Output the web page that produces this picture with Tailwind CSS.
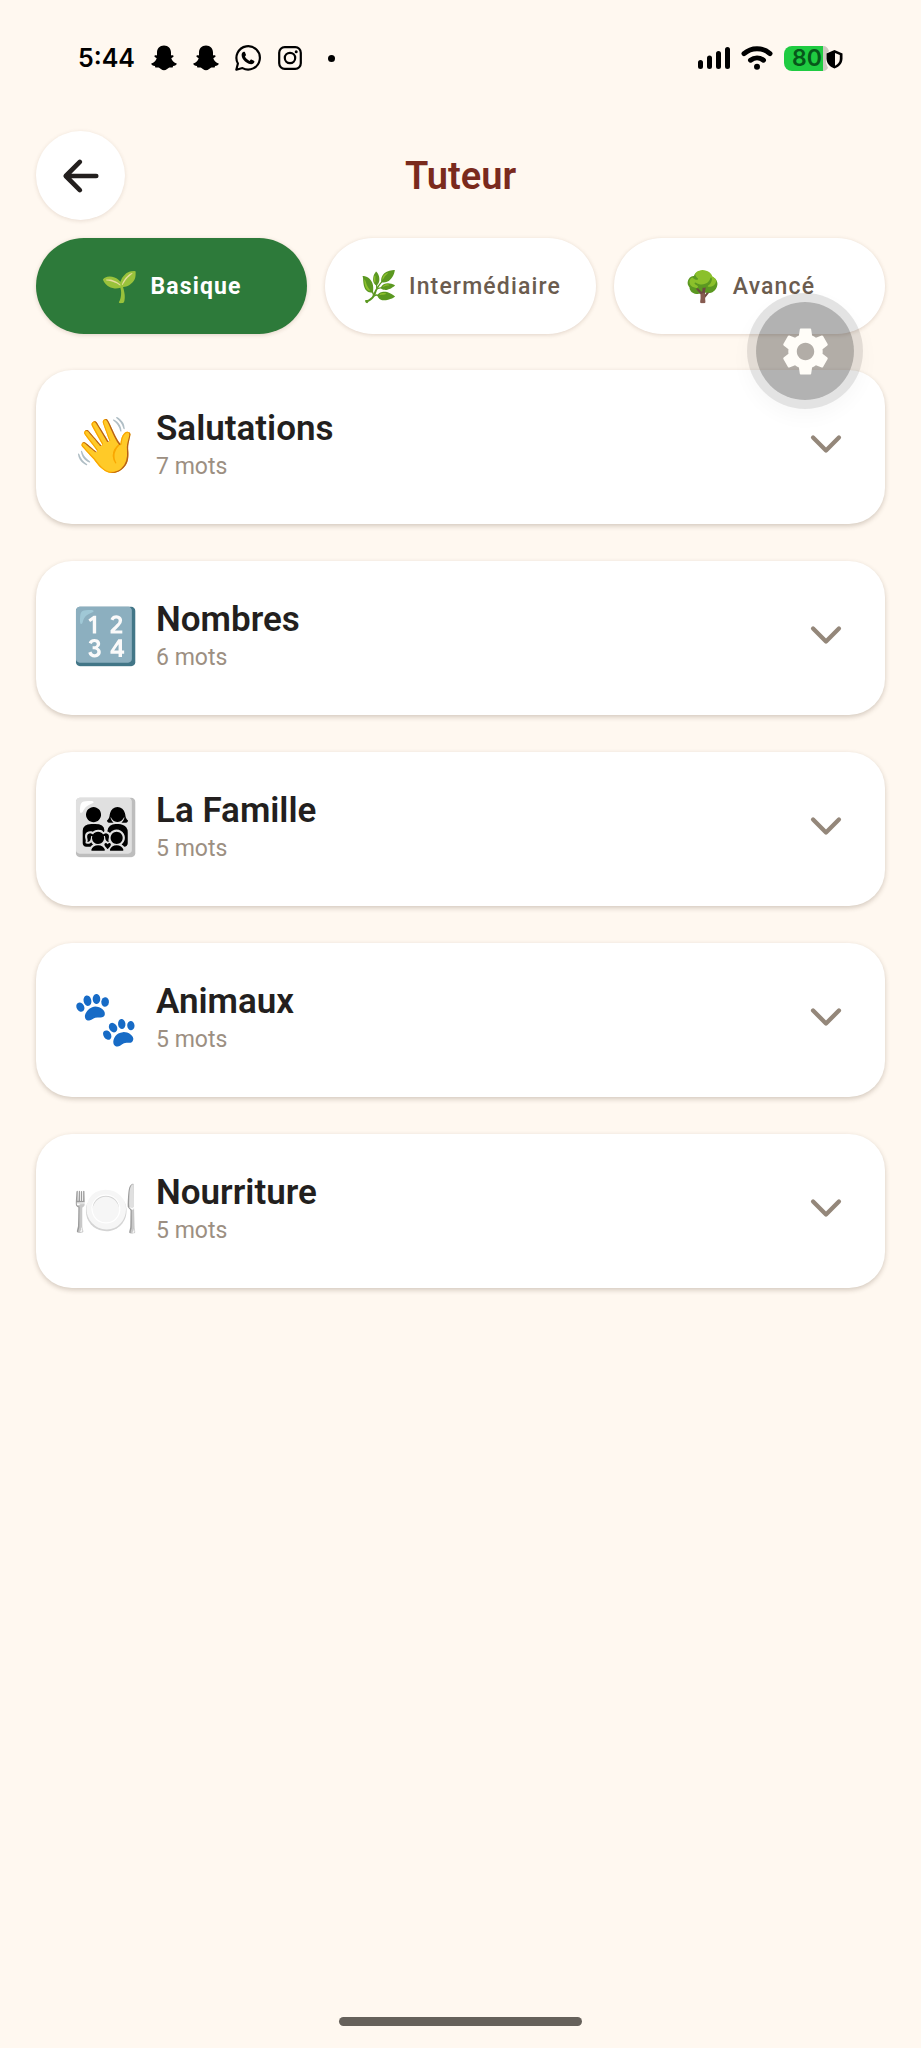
<!DOCTYPE html>
<html lang="fr">
<head>
<meta charset="utf-8">
<meta name="viewport" content="width=device-width, initial-scale=1">
<title>Tuteur</title>
<script src="https://cdn.jsdelivr.net/npm/@tailwindcss/browser@4"></script>
</head>
<body class="bg-[#fff8f0] font-[Roboto,sans-serif] text-[#231f1e]">
<svg class="hidden" aria-hidden="true">
  <symbol id="ghost" viewBox="0 0 26 26">
    <path d="M13 .6c4.300 0 7 3 7 7v2.900c1-.4 2.600-.4 2.600.8 0 .9-1.400 1.400-2.300 1.900.7 2.400 2.700 4.400 5.400 5.200.4 1.500-1.500 2.200-3.600 2.600-.3.500-.2 1.500-.9 1.600-1 .1-2-.3-3.300.1-1.500.6-2.600 2.600-4.900 2.600s-3.400-2-4.900-2.600c-1.300-.4-2.300 0-3.300-.1-.7-.1-.6-1.100-.9-1.600-2.100-.4-4-1.100-3.600-2.600 2.700-.8 4.700-2.800 5.400-5.200-.9-.5-2.300-1-2.300-1.900 0-1.200 1.600-1.200 2.600-.8V7.600c0-4 2.700-7 7-7z"/>
  </symbol>
  <symbol id="chevron" viewBox="0 0 512 512">
    <path fill="none" stroke="currentColor" stroke-linecap="round" stroke-linejoin="round" stroke-width="48" d="M112 184l144 144 144-144"/>
  </symbol>
</svg>
<div class="relative flex min-h-screen flex-col">

  <!-- Status bar -->
  <div class="flex h-[116px] items-center justify-between pr-[78px] pl-[78px]">
    <div class="flex items-center text-black">
      <span class="mr-[17px] w-14 font-[Inter,sans-serif] text-[25px] leading-[30px] font-semibold">5:44</span>
      <svg class="mr-4 size-[26px]" aria-label="Snapchat"><use href="#ghost"/></svg>
      <svg class="mr-4 size-[26px]" aria-label="Snapchat"><use href="#ghost"/></svg>
      <svg class="mr-4 size-[26px]" viewBox="0 0 24 24" aria-label="WhatsApp">
        <path fill="none" stroke="currentColor" stroke-width="2" stroke-linejoin="round" d="M1.200 22.800l1.500-5.700A10.800 10.800 0 1 1 6.900 21.300z"/>
        <path d="M8.300 6.300c.4 0 .7 0 .9.500l.9 2.200c.1.400 0 .6-.9 1.700.9 1.800 2.400 3.200 4.300 4 1-1.100 1.200-1.500 1.700-1.300l2.200 1.100c.5.200.6.400.5 1-.2 1.400-1.500 2.300-2.900 2.300-3.400 0-8.900-4.300-8.900-8.600 0-1.400.9-2.900 2.200-2.900z"/>
      </svg>
      <svg class="mr-[25px] size-[26px]" viewBox="0 0 26 26" aria-label="Instagram">
        <rect x="2.200" y="2.200" width="21.600" height="21.600" rx="5.500" fill="none" stroke="currentColor" stroke-width="2.200"/>
        <circle cx="13" cy="13" r="5.200" fill="none" stroke="currentColor" stroke-width="2.200"/>
        <circle cx="19.200" cy="6.800" r="1.500"/>
      </svg>
      <span class="size-[7px] rounded-full bg-black"></span>
    </div>
    <div class="flex items-center text-black">
      <svg class="mr-[11px] h-[24px] w-[33px]" viewBox="0 0 33 24" fill="none" stroke="currentColor" stroke-width="5" stroke-linecap="round" aria-label="Signal">
        <path d="M3.500 16.500v4M12.500 12v8.500M21.500 7.500v13M30.500 3.500v17"/>
      </svg>
      <svg class="mr-[11px] h-[24px] w-8" viewBox="0 0 32 24" fill="none" stroke="currentColor" stroke-width="5" stroke-linecap="round" aria-label="Wi-Fi">
        <path d="M3 7.600a19.500 19.500 0 0 1 26 0M9.500 14.200a10.500 10.500 0 0 1 13 0"/>
        <circle cx="16" cy="20.800" r="3" fill="currentColor" stroke="none"/>
      </svg>
      <div class="flex h-[25px] w-[39px] items-center justify-center rounded-l-[8px] bg-[#1fcb41] pl-[7px] font-[Inter,sans-serif] text-[23px] leading-[25px] font-semibold text-[#07571a]">80</div>
      <svg class="h-[25px] w-5" viewBox="0 0 20 25" aria-label="Batterie protégée">
        <path fill="#cfc9c2" d="M0 0c3.500 0 5 2 6 5L3 8v9l2 5c-1.500 2-2.500 3-5 3z"/>
        <path d="M11.500 4l8 3.500v5c0 5-3.500 8.500-8 10-4.500-1.500-8-5-8-10v-5z"/>
        <path fill="#fff8f0" d="M12 7l4.800 2v4c0 3.200-2 5.400-4.800 6.700z"/>
      </svg>
    </div>
  </div>

  <!-- Title bar -->
  <header class="grid grid-cols-[1fr_auto_1fr] items-center px-9 pt-[15px] pb-[18px]">
    <button type="button" aria-label="Retour" class="flex size-[89px] items-center justify-center rounded-full bg-white shadow-[0_1px_4px_rgba(90,50,20,0.14)]">
      <svg class="size-[50px]" viewBox="0 0 512 512" fill="none" stroke="currentColor" stroke-width="48" stroke-linecap="round" stroke-linejoin="round"><path d="M244 400L100 256l144-144M120 256h292"/></svg>
    </button>
    <h1 class="text-[38px] leading-[44px] font-semibold text-[#7a2a1d]">Tuteur</h1>
  </header>

  <!-- Levels -->
  <nav class="grid grid-cols-3 gap-[18px] px-9 pb-9 text-[23px] leading-[30px] font-medium tracking-wider text-[#6b5c4f]">
    <button type="button" class="flex h-24 items-center justify-center gap-3 rounded-full bg-[#2d7a3a] pt-[2px] font-bold text-white shadow-[0_1px_4px_rgba(90,50,20,0.18)]"><span class="text-[30px] tracking-normal">🌱</span>Basique</button>
    <button type="button" class="flex h-24 items-center justify-center gap-3 rounded-full bg-white pt-[2px] shadow-[0_1px_4px_rgba(90,50,20,0.18)]"><span class="text-[30px] tracking-normal">🌿</span>Intermédiaire</button>
    <button type="button" class="flex h-24 items-center justify-center gap-3 rounded-full bg-white pt-[2px] shadow-[0_1px_4px_rgba(90,50,20,0.18)]"><span class="text-[30px] tracking-normal">🌳</span>Avancé</button>
  </nav>

  <!-- Categories -->
  <main class="flex flex-col gap-[37px] px-9">
    <button type="button" class="flex items-center rounded-[36px] bg-white px-9 pt-9 pb-[42px] text-left shadow-[0_2px_5px_rgba(70,50,30,0.24)]">
      <span class="mr-[17px] w-[67px] pt-1 text-[54px] leading-[72px]">👋</span>
      <span class="flex flex-1 flex-col"><span class="text-[35px] leading-[46px] font-semibold">Salutations</span><span class="text-[23px] leading-[30px] text-[#9c8f82]">7 mots</span></span>
      <svg class="size-[46px] text-[#94877a]"><use href="#chevron"/></svg>
    </button>
    <button type="button" class="flex items-center rounded-[36px] bg-white px-9 pt-9 pb-[42px] text-left shadow-[0_2px_5px_rgba(70,50,30,0.24)]">
      <span class="mr-[17px] w-[67px] pt-1 text-[54px] leading-[72px]">🔢</span>
      <span class="flex flex-1 flex-col"><span class="text-[35px] leading-[46px] font-semibold">Nombres</span><span class="text-[23px] leading-[30px] text-[#9c8f82]">6 mots</span></span>
      <svg class="size-[46px] text-[#94877a]"><use href="#chevron"/></svg>
    </button>
    <button type="button" class="flex items-center rounded-[36px] bg-white px-9 pt-9 pb-[42px] text-left shadow-[0_2px_5px_rgba(70,50,30,0.24)]">
      <span class="mr-[17px] w-[67px] pt-1 text-[54px] leading-[72px]">👨‍👩‍👧‍👦</span>
      <span class="flex flex-1 flex-col"><span class="text-[35px] leading-[46px] font-semibold">La Famille</span><span class="text-[23px] leading-[30px] text-[#9c8f82]">5 mots</span></span>
      <svg class="size-[46px] text-[#94877a]"><use href="#chevron"/></svg>
    </button>
    <button type="button" class="flex items-center rounded-[36px] bg-white px-9 pt-9 pb-[42px] text-left shadow-[0_2px_5px_rgba(70,50,30,0.24)]">
      <span class="mr-[17px] w-[67px] pt-1 text-[54px] leading-[72px]">🐾</span>
      <span class="flex flex-1 flex-col"><span class="text-[35px] leading-[46px] font-semibold">Animaux</span><span class="text-[23px] leading-[30px] text-[#9c8f82]">5 mots</span></span>
      <svg class="size-[46px] text-[#94877a]"><use href="#chevron"/></svg>
    </button>
    <button type="button" class="flex items-center rounded-[36px] bg-white px-9 pt-9 pb-[42px] text-left shadow-[0_2px_5px_rgba(70,50,30,0.24)]">
      <span class="mr-[17px] w-[67px] pt-1 text-[54px] leading-[72px]">🍽️</span>
      <span class="flex flex-1 flex-col"><span class="text-[35px] leading-[46px] font-semibold">Nourriture</span><span class="text-[23px] leading-[30px] text-[#9c8f82]">5 mots</span></span>
      <svg class="size-[46px] text-[#94877a]"><use href="#chevron"/></svg>
    </button>
  </main>

  <!-- Floating settings button -->
  <button type="button" aria-label="Réglages" class="absolute top-[293px] right-[58px] flex size-[116px] items-center justify-center rounded-full border-[9px] border-black/11 bg-black/30 bg-clip-padding shadow-[0_8px_20px_rgba(0,0,0,0.03)]">
    <svg class="size-[55px]" viewBox="0 0 24 24" fill="#fffdf8"><path d="M19.430 12.980c.04-.32.07-.64.07-.98s-.03-.66-.07-.98l2.110-1.650c.19-.15.24-.42.120-.64l-2-3.460c-.12-.22-.39-.3-.61-.22l-2.490 1c-.52-.4-1.080-.73-1.690-.98l-.38-2.650C14.460 2.180 14.250 2 14 2h-4c-.25 0-.46.180-.49.420l-.38 2.650c-.61.250-1.170.590-1.690.980l-2.490-1c-.23-.09-.49 0-.61.220l-2 3.460c-.13.220-.07.490.120.640l2.110 1.650c-.04.320-.07.650-.07.980s.03.660.070.980l-2.110 1.650c-.19.150-.24.420-.12.640l2 3.460c.12.220.39.300.61.220l2.490-1c.52.400 1.080.730 1.690.980l.38 2.650c.03.240.240.420.490.420h4c.25 0 .46-.18.490-.42l.38-2.650c.61-.25 1.170-.59 1.690-.98l2.490 1c.23.090.490 0 .61-.22l2-3.460c.12-.22.070-.49-.12-.64l-2.110-1.650zM12 15.800c-2.100 0-3.800-1.700-3.800-3.800s1.700-3.800 3.800-3.800 3.800 1.700 3.800 3.800-1.700 3.800-3.800 3.800z"/></svg>
  </button>

  <!-- Home indicator -->
  <div class="mx-auto mt-auto mb-[22px] h-[9px] w-[243px] rounded-full bg-[#66615b]"></div>
</div>
</body>
</html>
